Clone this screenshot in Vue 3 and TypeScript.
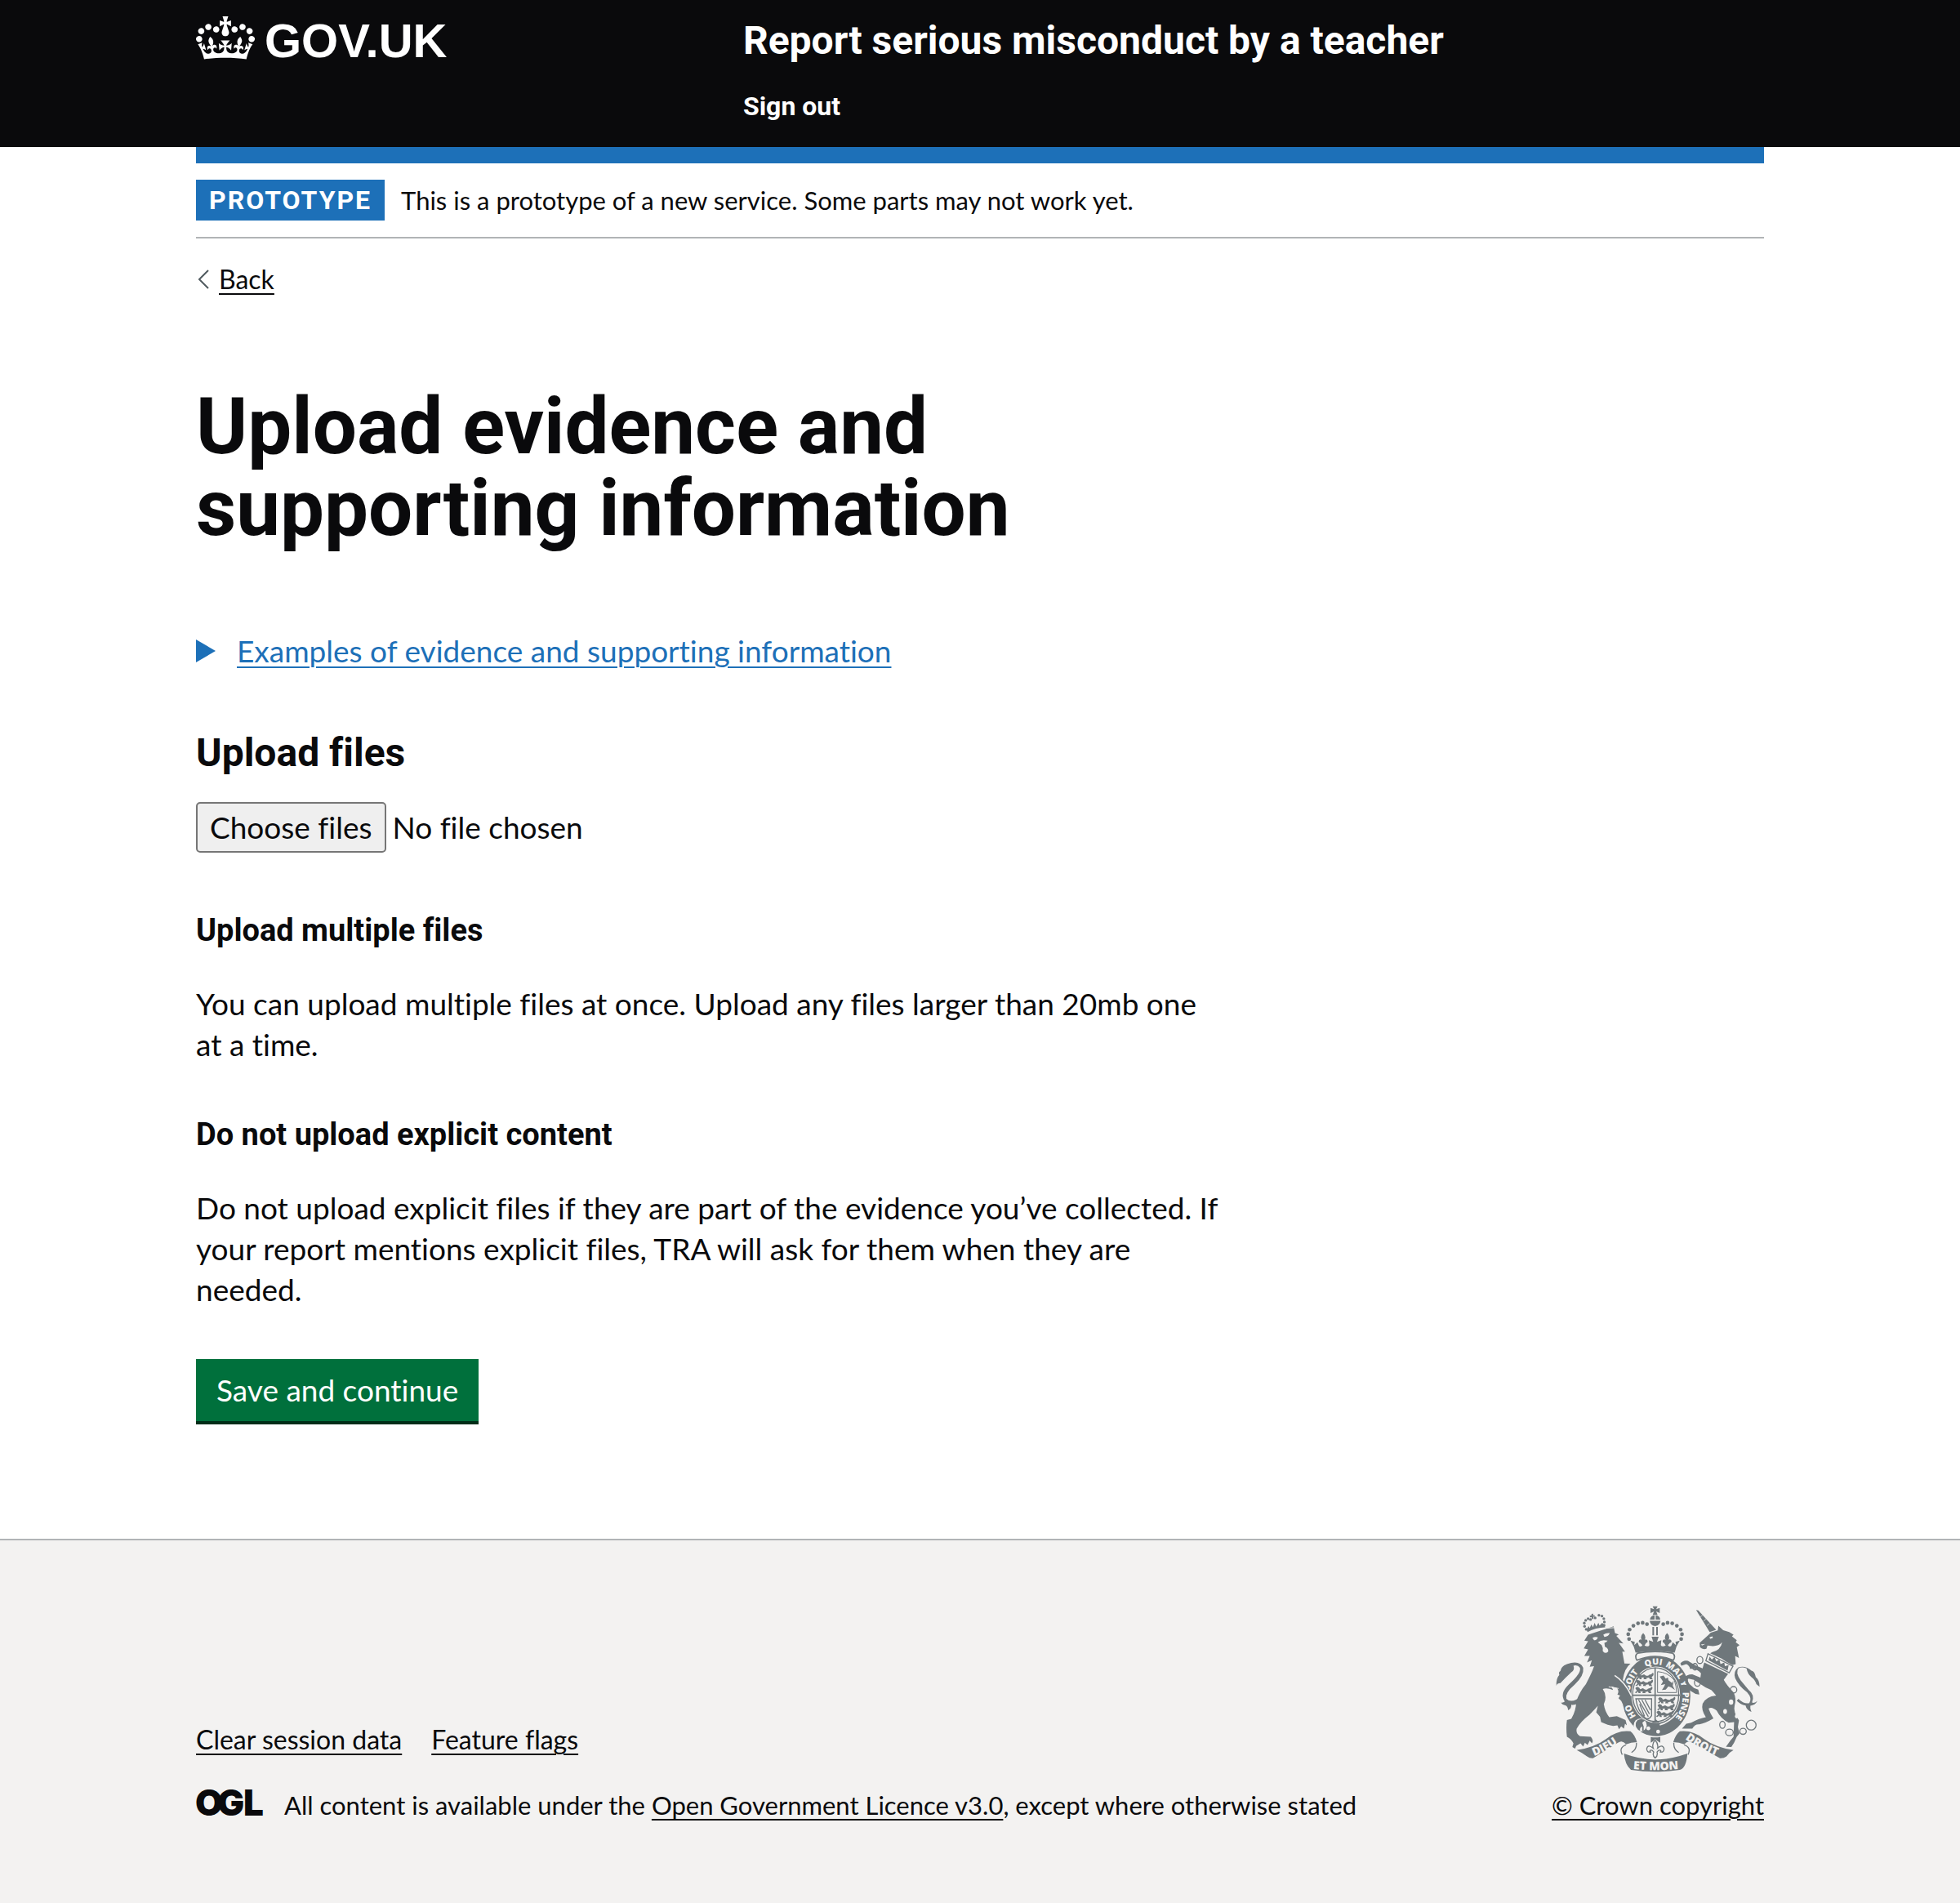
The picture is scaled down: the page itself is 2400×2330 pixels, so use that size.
<script setup lang="ts">
import { ref } from 'vue'

interface Guidance {
  title: string
  body: string
}

interface Dot {
  x: number
  y: number
}

const guidance: Guidance[] = [
  {
    title: 'Upload multiple files',
    body: 'You can upload multiple files at once. Upload any files larger than 20mb one at a time.',
  },
  {
    title: 'Do not upload explicit content',
    body: 'Do not upload explicit files if they are part of the evidence you’ve collected. If your report mentions explicit files, TRA will ask for them when they are needed.',
  },
]

const footerLinks = ['Clear session data', 'Feature flags']

const fileStatus = ref('No file chosen')

function onFiles(event: Event) {
  const files = (event.target as HTMLInputElement).files
  const count = files ? files.length : 0
  if (count === 0) fileStatus.value = 'No file chosen'
  else if (count === 1) fileStatus.value = files![0].name
  else fileStatus.value = `${count} files`
}

// Pearls on the left arch of the large crown; the right arch mirrors them.
const pearls: Dot[] = [
  { x: 341, y: 200 },
  { x: 338, y: 182 },
  { x: 343, y: 165 },
  { x: 357, y: 151 },
  { x: 374, y: 142 },
  { x: 391, y: 140 },
  { x: 407, y: 145 },
]

const lionPearls: Dot[] = [
  { x: 183, y: 164 },
  { x: 177, y: 153 },
  { x: 176, y: 141 },
  { x: 181, y: 131 },
  { x: 190, y: 125 },
  { x: 199, y: 128 },
  { x: 216, y: 122 },
  { x: 230, y: 112 },
  { x: 241, y: 115 },
  { x: 248, y: 125 },
  { x: 250, y: 137 },
  { x: 249, y: 149 },
]
</script>

<template>
  <div class="page">
    <header class="header">
      <div class="container header-row">
        <div class="header-logo">
          <a href="#" class="logo-link">
            <svg class="crown" viewBox="0 0 132 97" aria-hidden="true">
              <path
                fill="currentColor"
                fill-rule="evenodd"
                d="M25 30.2c3.5 1.5 7.7-.2 9.1-3.7 1.5-3.6-.2-7.8-3.9-9.2-3.6-1.4-7.6.3-9.1 3.9-1.4 3.5.3 7.5 3.9 9zM9 39.5c3.6 1.5 7.8-.2 9.2-3.7 1.5-3.6-.2-7.8-3.9-9.1-3.6-1.5-7.6.2-9.1 3.8-1.4 3.5.3 7.5 3.8 9zM4.4 57.2c3.5 1.5 7.7-.2 9.1-3.8 1.5-3.6-.2-7.7-3.9-9.1-3.5-1.5-7.6.3-9.1 3.8-1.4 3.5.3 7.6 3.9 9.1zm38.3-21.4c3.5 1.5 7.7-.2 9.1-3.8 1.5-3.6-.2-7.7-3.9-9.1-3.6-1.5-7.6.3-9.1 3.8-1.3 3.6.4 7.7 3.9 9.1zm64.4-5.6c-3.6 1.5-7.8-.2-9.1-3.7-1.5-3.6.2-7.8 3.8-9.2 3.6-1.4 7.7.3 9.2 3.9 1.3 3.5-.4 7.5-3.9 9zm15.9 9.3c-3.6 1.5-7.7-.2-9.1-3.7-1.5-3.6.2-7.8 3.7-9.1 3.6-1.5 7.7.2 9.2 3.8 1.5 3.5-.3 7.5-3.8 9zm4.7 17.7c-3.6 1.5-7.8-.2-9.2-3.8-1.5-3.6.2-7.7 3.9-9.1 3.6-1.5 7.7.3 9.2 3.8 1.3 3.5-.4 7.6-3.9 9.1zM89.3 35.8c-3.6 1.5-7.8-.2-9.2-3.8-1.4-3.6.2-7.7 3.9-9.1 3.6-1.5 7.7.3 9.2 3.8 1.4 3.6-.3 7.7-3.9 9.1zM69.7 17.7l8.9 4.7V9.3l-8.9 2.8c-.2-.3-.5-.6-.9-.9L72.4 0H59.6l3.5 11.2c-.3.3-.6.5-.9.9l-8.8-2.8v13.1l8.8-4.7c.3.3.6.7.9.9l-5 15.4v.1c-.2.8-.4 1.6-.4 2.4 0 4.1 3.1 7.5 7 8.1h.2c.3 0 .7.1 1 .1.4 0 .7 0 1-.1h.2c4-.6 7.1-4.1 7.1-8.1 0-.8-.1-1.7-.4-2.4V34l-5.1-15.4c.4-.2.7-.6 1-.9zM66 92.8c16.9 0 32.8 1.1 47.1 3.2 4-16.9 8.9-26.7 14-33.5l-9.6-3.4c1 4.9 1.1 7.2 0 10.2-1.5-1.4-3-4.3-4.2-8.7L108.6 76c2.8-2 5-3.2 7.5-3.3-4.4 9.4-10 11.9-13.6 11.2-4.3-.8-6.3-4.6-5.6-7.9 1-4.7 5.7-5.9 8-.5 4.3-8.7-3-11.4-7.6-8.8 7.1-7.2 7.9-13.5 2.1-21.1-8 6.1-8.1 12.3-4.5 20.8-4.7-5.4-12.1-2.5-9.5 6.2 3.4-5.2 7.9-2 7.2 3.1-.6 4.3-6.4 7.8-13.5 7.2-10.3-.9-10.9-8-11.2-13.8 2.5-.5 7.1 1.8 11 7.3L80.2 60c-4.1 4.4-8 5.3-12.3 5.4 1.4-4.4 8-11.6 8-11.6H55.5s6.4 7.2 7.9 11.6c-4.2-.1-8-1-12.3-5.4l1.4 16.4c3.9-5.5 8.5-7.7 10.9-7.3-.3 5.8-.9 12.8-11.1 13.8-7.2.6-12.9-2.9-13.5-7.2-.7-5 3.8-8.3 7.1-3.1 2.7-8.7-4.6-11.6-9.4-6.2 3.7-8.5 3.6-14.7-4.6-20.8-5.8 7.6-5 13.9 2.2 21.1-4.7-2.6-11.9.1-7.7 8.8 2.3-5.5 7.1-4.2 8.1.5.7 3.3-1.3 7.1-5.7 7.9-3.5.7-9-1.8-13.5-11.2 2.5.1 4.7 1.3 7.5 3.3l-4.7-15.4c-1.2 4.4-2.7 7.2-4.3 8.7-1.1-3-.9-5.3 0-10.2l-9.5 3.4c5 6.9 9.9 16.7 14 33.5 14.8-2.1 30.8-3.2 47.7-3.2z"
              />
            </svg>
            <span class="wordmark">GOV.UK</span>
          </a>
        </div>
        <div class="header-content">
          <a href="#" class="service-name">Report serious misconduct by a teacher</a>
          <nav>
            <a href="#" class="sign-out">Sign out</a>
          </nav>
        </div>
      </div>
    </header>

    <div class="container body">
      <div class="accent"></div>
      <div class="phase">
        <strong class="tag">Prototype</strong>
        <span>This is a prototype of a new service. Some parts may not work yet.</span>
      </div>

      <a href="#" class="back">
        <svg class="chevron" viewBox="0 0 14 24" aria-hidden="true">
          <path d="M13 1L2 12l11 11" fill="none" stroke="#505a5f" stroke-width="2" />
        </svg>
        <span class="link">Back</span>
      </a>

      <main class="main">
        <h1>Upload evidence and supporting information</h1>

        <button type="button" class="details">
          <svg class="triangle" viewBox="0 0 24 28" aria-hidden="true">
            <path d="M0 0l24 14L0 28z" fill="currentColor" />
          </svg>
          <span class="link">Examples of evidence and supporting information</span>
        </button>

        <form @submit.prevent>
          <h2><label for="evidence">Upload files</label></h2>
          <div class="file">
            <input id="evidence" type="file" multiple @change="onFiles" />
            <span class="file-button" aria-hidden="true">Choose files</span>
            <span aria-hidden="true">{{ fileStatus }}</span>
          </div>

          <section v-for="item in guidance" :key="item.title" class="guidance">
            <h3>{{ item.title }}</h3>
            <p>{{ item.body }}</p>
          </section>

          <button type="submit" class="save">Save and continue</button>
        </form>
      </main>
    </div>

    <footer class="footer">
      <div class="container footer-row">
        <div class="footer-meta">
          <ul class="footer-links">
            <li v-for="label in footerLinks" :key="label">
              <a href="#" class="link">{{ label }}</a>
            </li>
          </ul>
          <div class="licence">
            <svg class="ogl" viewBox="0 0 82 34" role="img" aria-label="Open Government Licence">
              <text x="-1 26 58" y="33">OGL</text>
            </svg>
            <span
              >All content is available under the
              <a href="#" class="link">Open Government Licence v3.0</a>, except where otherwise
              stated</span
            >
          </div>
        </div>

        <a href="#" class="copyright">
          <svg class="arms" viewBox="72 77 750 614" aria-hidden="true">
            <defs>
              <path id="garter" d="M441 524A98 115 0 0 1 441 294A98 115 0 0 1 441 524" />
              <path id="dieu" d="M212 631Q264 612 324 566" />
              <path id="etmon" d="M340 677Q437 688 540 677" />
              <path id="droit" d="M546 567Q606 612 690 640" />
              <g id="passant">
                <path
                  d="M-32-8L-26-13L-18-10L-14-4L-4-8L4-3H12C14-10 22-4 26-12C28-16 34-12 30-4L24 2L28 10H18L14 4L4 6L6 10H-6L-4 4L-14 4L-12 10H-20L-22 4L-28 10L-34 8L-26 2Z"
                />
              </g>
            </defs>

            <!-- Large crown -->
            <g class="ink">
              <path
                d="M428 79H446L441 90L454 85V104L441 98L446 111H428L433 98L420 104V85L433 90Z"
              />
              <path d="M418 128Q420 113 435 112V128ZM439 112Q454 113 456 128H439Z" />
              <path d="M417 133H457Q455 150 437 152Q419 150 417 133Z" />
              <circle v-for="(p, i) in pearls" :key="`l${i}`" :cx="p.x" :cy="p.y" r="7" />
              <circle v-for="(p, i) in pearls" :key="`r${i}`" :cx="874 - p.x" :cy="p.y" r="7" />
              <path d="M427 155H433V186H427ZM441 155H447V186H441Z" />
              <path
                d="M346 206L362 210L360 222L372 212L378 226Q386 230 390 222L382 214Q374 214 378 204Q384 198 388 204Q380 190 393 178Q406 190 398 204Q402 198 408 204Q412 214 404 214L398 224Q412 230 416 222L414 204L430 210L424 191H450L444 210L460 204L458 222Q462 230 476 224L470 214Q462 214 466 204Q472 198 476 204Q468 190 481 178Q494 190 486 204Q490 198 496 204Q500 214 492 214L484 222Q488 230 496 226L502 212L514 222L512 210L528 206Q514 226 509 250Q437 238 365 250Q360 226 346 206Z"
              />
            </g>

            <!-- Garter, shield and buckle -->
            <ellipse cx="441" cy="409" rx="126" ry="149" class="ink" />
            <path
              d="M372 252Q437 240 502 252Q514 262 504 278Q437 250 370 278Q360 262 372 252Z"
              class="rim"
              stroke-width="5"
            />
            <ellipse cx="439" cy="405" rx="90" ry="104" class="paper" />
            <ellipse cx="439" cy="405" rx="85" ry="99" class="line" stroke-width="4" />
            <path d="M437 305V508M350 407H528" class="line" stroke-width="5" />
            <g class="ink">
              <use href="#passant" transform="translate(400 338)" />
              <use href="#passant" transform="translate(398 363)" />
              <use href="#passant" transform="translate(396 389)" />
              <use href="#passant" transform="translate(480 427)" />
              <use href="#passant" transform="translate(478 452)" />
              <use href="#passant" transform="translate(474 477)" />
              <path
                d="M454 338L468 334L476 346L484 342L486 352L500 362L506 350L502 372L510 388L496 378L486 374L476 386L462 388L470 376L474 366L458 370L466 356Z"
              />
            </g>
            <path d="M446 320Q484 322 508 352Q516 376 516 397H446Z" class="line" stroke-width="3" />
            <path
              d="M366 420H424V482Q414 498 402 492Q372 466 366 420ZM376 424L412 486M388 424L416 476M400 424L420 462M380 440L398 484"
              class="line"
              stroke-width="4"
            />
            <path d="M424 508H454L440 496Z" class="ink" />
            <path d="M454 516Q490 508 520 470" class="cut" stroke-width="5" />
            <circle cx="382" cy="517" r="24" class="paper" />
            <path
              d="M400 500Q378 488 366 508Q362 530 382 538Q378 524 394 520Q380 512 400 500Z"
              class="ink"
            />
            <path d="M372 500Q396 508 392 538" class="line" stroke-width="6" />
            <circle cx="412" cy="529" r="7" class="paper" />
            <circle cx="448" cy="541" r="7" class="paper" />
            <g class="motto">
              <text><textPath href="#garter" startOffset="13%">HO</textPath></text>
              <text><textPath href="#garter" startOffset="28%">SOIT</textPath></text>
              <text><textPath href="#garter" startOffset="44%">QUI</textPath></text>
              <text><textPath href="#garter" startOffset="55%">MAL</textPath></text>
              <text><textPath href="#garter" startOffset="67%">Y</textPath></text>
              <text><textPath href="#garter" startOffset="73%">PENSE</textPath></text>
            </g>

            <!-- Lion -->
            <path
              d="M88 362Q76 362 73 372Q72 344 84 332Q80 322 88 318Q90 300 112 292Q160 276 172 306Q176 336 140 368Q104 398 110 420Q130 440 168 408L178 416Q148 446 128 442Q130 456 116 462Q116 448 106 444Q96 444 90 434Q98 436 104 430Q84 400 118 368Q166 326 160 306Q152 294 136 298Q142 314 128 322Q104 344 88 362Z"
              class="ink"
            />
            <path
              d="M190 184L284 153L289 178L303 183L294 188L320 216L303 214L326 246L316 246L324 290L346 291Q324 308 318 350L338 376L350 410L345 436L336 424L330 434L324 432L318 440L312 428L302 418L308 408L298 404Q306 392 296 380L276 374L282 388Q260 378 244 384Q262 410 248 440Q252 468 268 488L296 484L328 498L333 518L326 512L322 530L312 522L304 532L298 518L282 520L262 516L238 506L234 486L220 470L226 446Q216 458 196 478Q160 506 148 530Q144 548 160 558L200 560Q212 574 204 584L196 574L188 590L178 582L172 596L162 584L146 594L142 604L132 598L136 584Q128 568 112 560Q108 526 112 498L128 494Q146 464 146 430Q160 392 182 366Q206 320 212 300L196 302L204 278L186 286L196 262L176 262L190 238L174 234L190 208L176 206Z"
              class="ink"
            />
            <g class="paper">
              <path d="M206 196Q216 190 226 194Q222 206 212 204ZM246 184Q256 176 270 178Q264 192 250 192Z" />
              <path d="M226 212Q240 200 262 206Q258 212 250 214L252 228Q266 234 264 246Q252 256 244 244Q246 232 240 222Z" />
            </g>
            <path d="M288 334Q326 358 350 410" class="cut" stroke-width="5" />
            <path d="M266 376L302 382" class="cut" stroke-width="3" />
            <path d="M186 182Q232 158 286 158" class="cut" stroke-width="3" />
            <g class="ink">
              <circle v-for="(p, i) in lionPearls" :key="`c${i}`" :cx="p.x" :cy="p.y" r="5" />
              <path
                d="M184 164L192 152L196 160L202 146L208 156L214 140L220 154L228 140L232 150L242 140L250 148L253 157Q218 158 188 174Z"
              />
              <path d="M203 107L209 106L208 112L214 112L215 118L209 118L210 126L204 126L203 119L197 120L196 114L202 113Z" />
            </g>

            <!-- Unicorn -->
            <path d="M588 93L596 94L662 166L638 174Z" class="ink" />
            <path d="M604 118L612 112M616 134L624 126M628 150L638 142" class="cut" stroke-width="2" />
            <path
              d="M601 214L632 186L642 176L668 168L670 151L688 167L710 174L726 184L720 190L738 204L734 212L748 222L738 230L746 270L732 262L734 292L722 296L700 284L682 272L640 252L648 248Q678 242 684 212Q672 226 650 226L630 224L626 236Q612 240 602 230Z"
              class="ink"
            />
            <path d="M637 194L648 190L650 196L640 199ZM606 220L622 218L610 224Z" class="paper" />
            <path d="M632 254L724 300L710 324L624 280Z" class="rim" stroke-width="4" />
            <path
              d="M634 278L638 264L646 276L656 266L662 282L674 276L678 292L692 286L694 300L708 296L704 316Z"
              class="ink"
            />
            <path
              d="M752 352Q732 322 744 308Q756 300 774 308Q778 330 792 340Q806 350 810 366L822 376Q822 350 808 340Q804 318 792 316Q770 296 744 304Q724 318 732 344Q744 372 776 396Q796 418 784 436Q764 440 744 420L738 428Q758 446 770 444Q774 462 792 468Q786 454 788 446Q806 444 814 428Q804 438 794 434Q806 406 782 388Z"
              class="ink"
            />
            <path
              d="M618 286L706 328L690 350Q702 372 726 396Q738 420 730 444Q724 468 746 500L742 524L748 548L738 560L728 582L718 598L698 597L714 574L726 560L728 506L708 508Q680 496 664 464Q646 448 634 456Q640 474 652 492Q622 510 600 514Q584 512 574 530L536 530L552 512L570 508Q600 492 624 488Q606 460 612 438Q624 412 662 408Q652 396 644 388Q622 380 610 370L580 350L560 346Q552 352 564 366L580 380L596 386L600 404L586 402L566 390Q548 366 544 344Q552 330 574 330L604 342L606 326Q590 308 566 310Q564 298 552 292L534 298L530 290Q540 276 558 280L584 296L612 308Z"
              class="ink"
            />
            <g class="line" stroke-width="4">
              <ellipse cx="602" cy="277" rx="11" ry="13" />
              <ellipse cx="584" cy="302" rx="9" ry="12" />
              <ellipse cx="593" cy="360" rx="11" ry="14" />
              <ellipse cx="726" cy="387" rx="12" ry="12" />
              <ellipse cx="685" cy="516" rx="10" ry="13" />
              <ellipse cx="711" cy="544" rx="14" ry="12" />
              <ellipse cx="761" cy="540" rx="12" ry="11" />
              <circle cx="791" cy="517" r="18" />
            </g>
            <g class="paper">
              <ellipse cx="717" cy="432" rx="8" ry="10" />
              <ellipse cx="695" cy="467" rx="7" ry="9" />
              <ellipse cx="737" cy="484" rx="6" ry="8" />
            </g>

            <!-- Ribbon -->
            <path
              d="M148 609Q216 598 256 568Q300 534 346 540Q362 552 370 580Q348 580 330 588Q316 570 300 582L208 639Q196 640 186 632Q166 618 148 609Z"
              class="ink"
            />
            <path
              d="M726 609Q658 598 618 568Q574 534 528 540Q512 552 504 580Q526 580 544 588Q558 570 574 582L676 639Q690 640 700 632Q712 616 726 609Z"
              class="ink"
            />
            <path
              d="M368 582Q370 606 350 618M330 590Q302 600 316 626M506 582Q504 606 524 618M544 590Q572 600 558 626"
              class="line"
              stroke-width="4"
            />
            <path
              d="M322 622Q380 644 437 644Q494 644 556 622Q552 676 528 682Q437 696 348 682Q326 664 322 622Z"
              class="ink"
            />
            <path d="M421 561Q437 564 456 561V582L446 576L437 568L430 576L421 582Z" class="ink" />
            <path
              d="M437 572Q424 586 430 602Q410 586 406 604Q406 618 420 616Q414 608 426 610L432 616Q426 630 437 638Q448 630 444 616L450 610Q462 608 456 616Q470 618 470 604Q464 586 446 602Q450 586 437 572Z"
              class="line"
              stroke-width="4"
            />
            <g class="ribbon-text">
              <text><textPath href="#dieu" startOffset="0%">DIEU</textPath></text>
              <text text-anchor="middle"><textPath href="#etmon" startOffset="50%">ET MON</textPath></text>
              <text><textPath href="#droit" startOffset="1%">DROIT</textPath></text>
            </g>
          </svg>
          <span class="link">© Crown copyright</span>
        </a>
      </div>
    </footer>
  </div>
</template>

<style>
body {
  margin: 0;
  background: #f3f2f1;
}
</style>

<style scoped>
.page {
  color: #0a0a0c;
  font-family: Lato, 'Liberation Sans', sans-serif;
  font-size: 37px;
  font-variant-ligatures: none;
  line-height: 50px;
  background: #fff;
}

.container {
  max-width: 1920px;
  margin: 0 auto;
}

a {
  color: inherit;
  text-decoration: none;
}

button {
  border: 0;
  padding: 0;
  font: inherit;
  font-variant-ligatures: none;
  cursor: pointer;
}

.link {
  text-decoration: underline;
  text-decoration-thickness: 2px;
  text-underline-offset: 5px;
}

h1,
h2,
h3,
.tag,
.header-content {
  margin: 0;
  font-family: Roboto, 'Liberation Sans', sans-serif;
  font-weight: 700;
}

/* Header */
.header {
  color: #fff;
  background: #0a0a0c;
}

.header-row {
  display: flex;
  padding: 20px 0 30px;
}

.header-logo {
  width: 33.33%;
}

.logo-link {
  display: flex;
  align-items: flex-start;
  gap: 12px;
  width: fit-content;
}

.crown {
  width: 72px;
  height: 53px;
}

.wordmark {
  font: 700 58px/60px 'Liberation Sans', sans-serif;
}

.header-content {
  display: flex;
  flex: 1;
  flex-direction: column;
  align-items: flex-start;
  gap: 30px;
  padding-left: 30px;
}

.service-name {
  font-size: 48px;
  line-height: 60px;
}

.sign-out {
  display: block;
  font-size: 32px;
  line-height: 40px;
}

/* Phase banner and back link */
.accent {
  height: 20px;
  background: #1d70b8;
}

.phase {
  display: flex;
  align-items: center;
  gap: 20px;
  padding: 20px 0;
  border-bottom: 2px solid #b1b4b6;
  font-size: 31px;
}

.tag {
  padding: 0 16px;
  color: #fff;
  font-size: 32px;
  letter-spacing: 2px;
  text-transform: uppercase;
  background: #1d70b8;
}

.back {
  display: flex;
  align-items: center;
  gap: 12px;
  width: fit-content;
  margin-top: 30px;
  padding-left: 2px;
  font-size: 32px;
  line-height: 40px;
}

.chevron {
  width: 14px;
  height: 24px;
}

/* Main column */
.main {
  max-width: 1260px;
  padding: 110px 0 140px;
}

h1 {
  font-size: 96px;
  line-height: 100px;
}

.details {
  display: flex;
  align-items: center;
  gap: 26px;
  margin: 100px 0 70px;
  color: #1d70b8;
  background: none;
}

.triangle {
  width: 24px;
  height: 28px;
}

h2 {
  font-size: 48px;
  line-height: 60px;
}

.file {
  position: relative;
  display: flex;
  align-items: center;
  gap: 8px;
  margin: 30px 0 70px;
}

/* The native picker covers the drawn face and takes its clicks. */
.file input {
  position: absolute;
  inset: 0;
  opacity: 0;
  cursor: pointer;
}

.file-button {
  padding: 4px 15px;
  border: 2px solid #767676;
  border-radius: 5px;
  background: #efefef;
}

.guidance {
  margin-bottom: 60px;
}

h3 {
  font-size: 38px;
}

p {
  margin: 40px 0 0;
}

.save {
  display: block;
  margin-bottom: 4px;
  padding: 13px 25px;
  color: #fff;
  background: #00703c;
  box-shadow: 0 4px 0 #002d18;
}

/* Footer */
.footer {
  padding: 80px 0 100px;
  border-top: 2px solid #b1b4b6;
  font-size: 31px;
  line-height: 40px;
  background: #f3f2f1;
}

.footer-row {
  display: flex;
  align-items: flex-end;
  justify-content: space-between;
}

.footer-links {
  display: flex;
  gap: 36px;
  margin: 0 0 40px;
  padding: 0;
  font-size: 32px;
  list-style: none;
}

.licence {
  display: flex;
  gap: 26px;
}

.ogl {
  width: 82px;
  height: 34px;
  overflow: visible;
}

.ogl text {
  font: 900 44px Inter, sans-serif;
  fill: #0a0a0c;
}

.copyright {
  display: flex;
  flex-direction: column;
  align-items: center;
  gap: 20px;
}

/* Coat of arms */
.arms {
  width: 250px;
  height: 204px;
}

.ink {
  fill: #6f777b;
}

.paper {
  fill: #f3f2f1;
}

.line {
  fill: none;
  stroke: #6f777b;
}

.rim {
  fill: #f3f2f1;
  stroke: #6f777b;
}

.cut {
  fill: none;
  stroke: #f3f2f1;
}

.motto,
.ribbon-text {
  fill: #f3f2f1;
  font-family: 'Open Sans', sans-serif;
  font-weight: 800;
}

.motto {
  font-size: 32px;
}

.ribbon-text {
  font-size: 42px;
}
</style>
